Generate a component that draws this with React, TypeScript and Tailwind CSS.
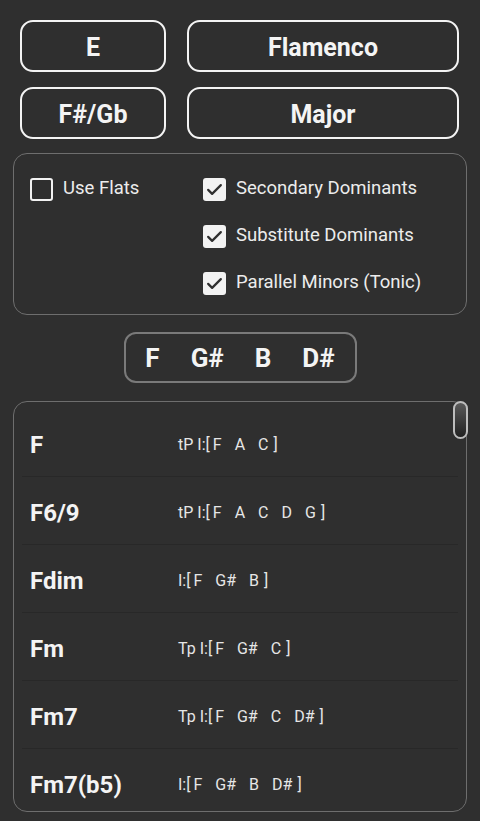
import React from 'react';

const chords = [
  { name: 'F', func: 'tP I:', notes: ['F', 'A', 'C'] },
  { name: 'F6/9', func: 'tP I:', notes: ['F', 'A', 'C', 'D', 'G'] },
  { name: 'Fdim', func: 'I:', notes: ['F', 'G#', 'B'] },
  { name: 'Fm', func: 'Tp I:', notes: ['F', 'G#', 'C'] },
  { name: 'Fm7', func: 'Tp I:', notes: ['F', 'G#', 'C', 'D#'] },
  { name: 'Fm7(b5)', func: 'I:', notes: ['F', 'G#', 'B', 'D#'] },
];

const Check = ({ checked }: { checked: boolean }) =>
  checked ? (
    <span className="flex h-[23px] w-[23px] shrink-0 items-center justify-center rounded-[3px] bg-[#f2f2f2]">
      <svg width="19" height="19" viewBox="0 0 24 24" fill="none">
        <path d="M4 12.5l5 5L20 6.5" stroke="#2f2f2f" strokeWidth="2.8" strokeLinecap="round" strokeLinejoin="round" />
      </svg>
    </span>
  ) : (
    <span className="h-[23px] w-[23px] shrink-0 rounded-[3px] border-[2.5px] border-[#f2f2f2]" />
  );

const Option = ({ label, checked }: { label: string; checked: boolean }) => (
  <div className="flex h-[24px] items-center gap-[10px]">
    <Check checked={checked} />
    <span className="whitespace-nowrap text-[18.5px] text-[#ececec]">{label}</span>
  </div>
);

const Btn = ({ children }: { children: React.ReactNode }) => (
  <button className="flex h-[52px] items-center justify-center rounded-[13px] border-[2.5px] border-[#f4f4f4] pt-[3px] text-[25px] font-bold text-[#f4f4f4]">
    {children}
  </button>
);

export default function App() {
  return (
    <div
      className="flex h-[821px] w-[480px] flex-col overflow-hidden bg-[#2f2f2f] text-white"
      style={{ fontFamily: 'Roboto, "Liberation Sans", sans-serif' }}
    >
      <div className="grid grid-cols-[146px_272px] gap-x-[21px] gap-y-[15px] px-[20px] pt-[20px]">
        <Btn>E</Btn>
        <Btn>Flamenco</Btn>
        <Btn>F#/Gb</Btn>
        <Btn>Major</Btn>
      </div>

      <div className="mx-[13px] mt-[14px] flex h-[162px] rounded-[14px] border-[1.5px] border-[#6e6e6e] pl-[16px] pt-[23px]">
        <div className="w-[173px]">
          <Option label="Use Flats" checked={false} />
        </div>
        <div className="flex flex-col gap-[23px]">
          <Option label="Secondary Dominants" checked />
          <Option label="Substitute Dominants" checked />
          <Option label="Parallel Minors (Tonic)" checked />
        </div>
      </div>

      <div className="mt-[17px] flex justify-center">
        <div className="flex h-[51px] w-[233px] items-center justify-center gap-[31px] rounded-[12px] border-[2px] border-[#7a7a7a] pt-[2px] text-[26px] font-bold text-[#f4f4f4]">
          <span>F</span>
          <span>G#</span>
          <span>B</span>
          <span>D#</span>
        </div>
      </div>

      <div className="relative mx-[13px] mt-[18px] h-[411px] rounded-[14px] border-[1.5px] border-[#6e6e6e]">
        <div className="h-full overflow-hidden rounded-[14px] px-[8px] pt-[7px]">
          {chords.map((c, i) => (
            <div
              key={c.name}
              className={`flex h-[68px] items-center pt-[4px] ${i < chords.length - 1 ? 'border-b border-[#282828]' : ''}`}
            >
              <span className="w-[156px] pl-[8px] text-[24px] font-bold text-[#f4f4f4]">{c.name}</span>
              <span className="flex text-[16px] text-[#e6e6e6]">
                <span>{c.func}</span>
                <span>[</span>
                {c.notes.map((n, j) => (
                  <span key={j} className={j === 0 ? 'ml-[3px]' : 'ml-[13px]'}>
                    {n}
                  </span>
                ))}
                <span className="ml-[5px]">]</span>
              </span>
            </div>
          ))}
        </div>
        <div className="absolute -right-[2px] top-[-1px] h-[38px] w-[15px] rounded-full border-[2px] border-[#bdbdbd] bg-gradient-to-b from-[#5a5a5a] to-[#222]" />
      </div>
    </div>
  );
}
